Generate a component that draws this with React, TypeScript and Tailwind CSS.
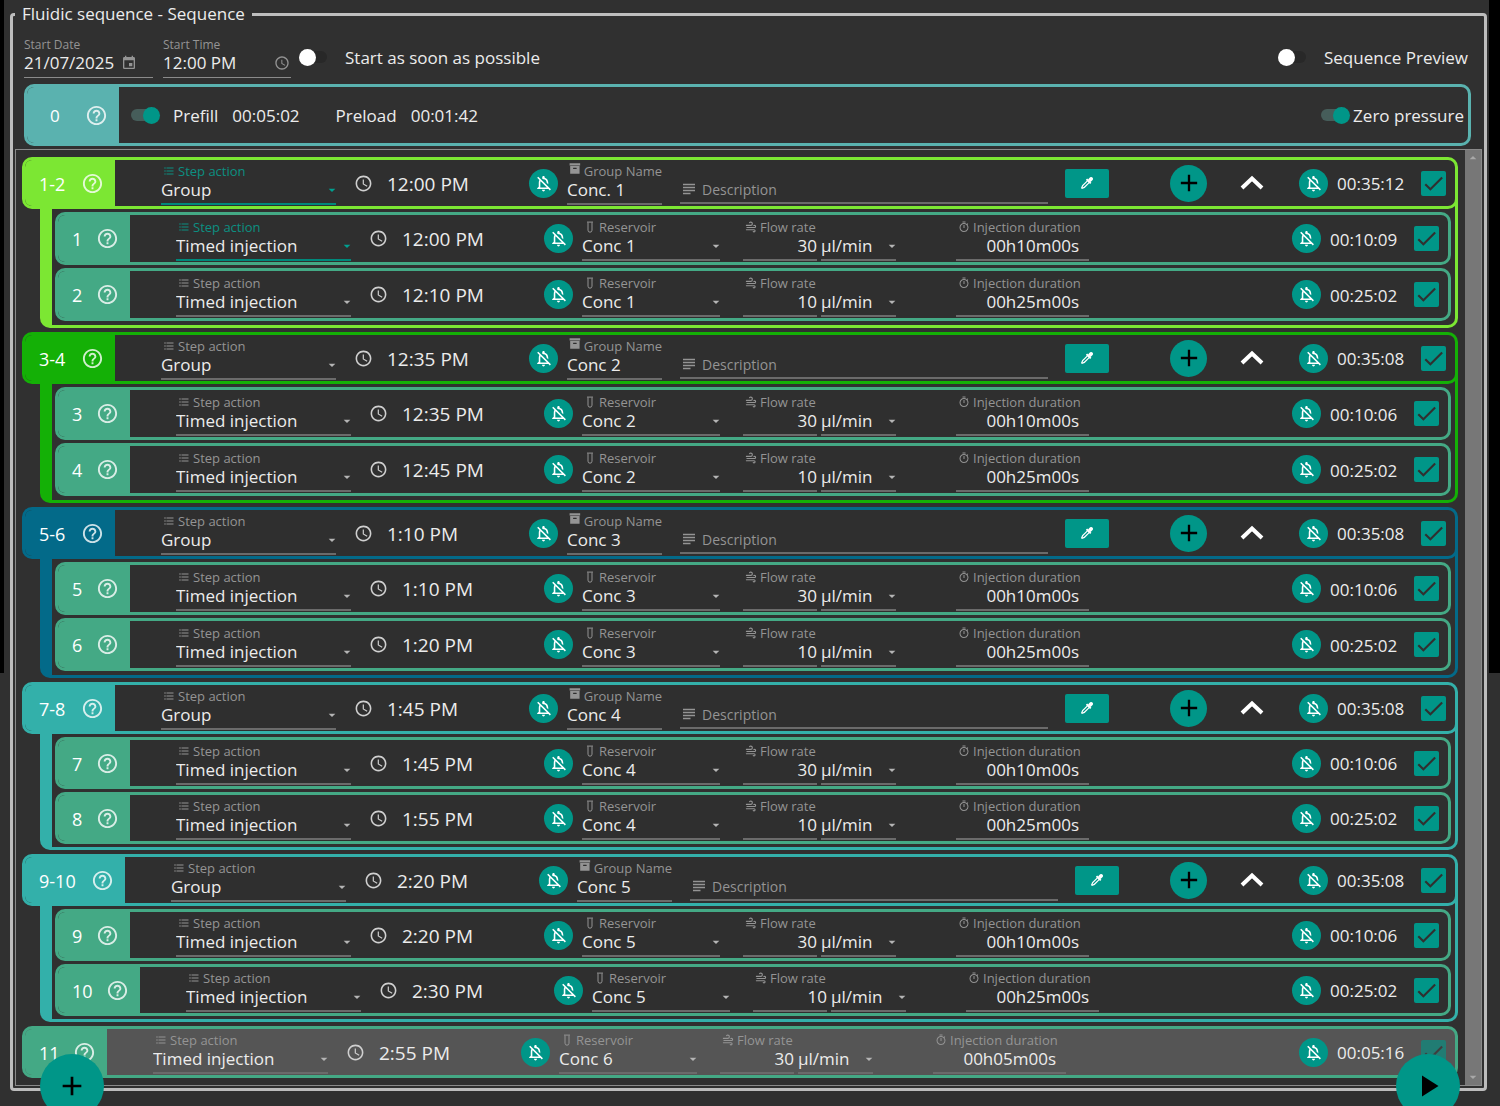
import React, { useId, useState } from 'react'
import {
  MdAdd,
  MdArrowDropDown,
  MdCheck,
  MdEvent,
  MdFormatListBulleted,
  MdHelpOutline,
  MdOutlineNotificationsOff,
  MdOutlineTimer,
  MdPlayArrow,
  MdSchedule,
  MdSubject,
} from 'react-icons/md'

interface Step {
  id: string
  time: string
  duration: string
  reservoir: string
  flow: string
  injection: string
  active?: boolean
}

interface Group {
  id: string
  name: string
  time: string
  duration: string
  tone: Tone
  active?: boolean
  compact?: boolean
  steps: Step[]
}

type Tone = 'lime' | 'green' | 'blue' | 'teal'

const tones: Record<Tone, { border: string; fill: string }> = {
  lime: { border: 'border-[#7ce733]', fill: 'bg-[#7ce733]' },
  green: { border: 'border-[#14b006]', fill: 'bg-[#14b006]' },
  blue: { border: 'border-[#036a89]', fill: 'bg-[#036a89]' },
  teal: { border: 'border-[#33b0aa]', fill: 'bg-[#33b0aa]' },
}

const groups: Group[] = [
  {
    id: '1-2', name: 'Conc. 1', time: '12:00 PM', duration: '00:35:12', tone: 'lime', active: true,
    steps: [
      { id: '1', time: '12:00 PM', duration: '00:10:09', reservoir: 'Conc 1', flow: '30', injection: '00h10m00s', active: true },
      { id: '2', time: '12:10 PM', duration: '00:25:02', reservoir: 'Conc 1', flow: '10', injection: '00h25m00s' },
    ],
  },
  {
    id: '3-4', name: 'Conc 2', time: '12:35 PM', duration: '00:35:08', tone: 'green',
    steps: [
      { id: '3', time: '12:35 PM', duration: '00:10:06', reservoir: 'Conc 2', flow: '30', injection: '00h10m00s' },
      { id: '4', time: '12:45 PM', duration: '00:25:02', reservoir: 'Conc 2', flow: '10', injection: '00h25m00s' },
    ],
  },
  {
    id: '5-6', name: 'Conc 3', time: '1:10 PM', duration: '00:35:08', tone: 'blue',
    steps: [
      { id: '5', time: '1:10 PM', duration: '00:10:06', reservoir: 'Conc 3', flow: '30', injection: '00h10m00s' },
      { id: '6', time: '1:20 PM', duration: '00:25:02', reservoir: 'Conc 3', flow: '10', injection: '00h25m00s' },
    ],
  },
  {
    id: '7-8', name: 'Conc 4', time: '1:45 PM', duration: '00:35:08', tone: 'teal', compact: true,
    steps: [
      { id: '7', time: '1:45 PM', duration: '00:10:06', reservoir: 'Conc 4', flow: '30', injection: '00h10m00s' },
      { id: '8', time: '1:55 PM', duration: '00:25:02', reservoir: 'Conc 4', flow: '10', injection: '00h25m00s' },
    ],
  },
  {
    id: '9-10', name: 'Conc 5', time: '2:20 PM', duration: '00:35:08', tone: 'teal', compact: true,
    steps: [
      { id: '9', time: '2:20 PM', duration: '00:10:06', reservoir: 'Conc 5', flow: '30', injection: '00h10m00s' },
      { id: '10', time: '2:30 PM', duration: '00:25:02', reservoir: 'Conc 5', flow: '10', injection: '00h25m00s' },
    ],
  },
]

const lastStep: Step = {
  id: '11', time: '2:55 PM', duration: '00:05:16', reservoir: 'Conc 6', flow: '30', injection: '00h05m00s',
}

// Badge width follows the number of characters in the step label
const badgeWidths: Record<number, string> = {
  1: 'w-[72px]',
  2: 'w-[82px]',
  3: 'w-[90px]',
  4: 'w-[100px]',
}

function TubeIcon() {
  return (
    <svg viewBox="0 0 12 12" className="size-3" fill="none" stroke="currentColor" aria-hidden="true">
      <path d="M3 1.1h6M4 1.5v7.7a2 2 0 0 0 4 0V1.5" />
    </svg>
  )
}

function ArchiveIcon() {
  return (
    <svg viewBox="2 3 20 20" className="mb-1 size-3" fill="currentColor" aria-hidden="true">
      <path d="M3 3h18v4H3zM4 8h16v13H4zm5.500 3a.5.5 0 0 0-.5.5V13h6v-1.500a.5.5 0 0 0-.5-.5z" fillRule="evenodd" />
    </svg>
  )
}

function WindIcon() {
  return (
    <svg viewBox="2 1 21 22" className="size-3" fill="currentColor" aria-hidden="true">
      <path d="M4 10a1 1 0 0 1 0-2h8a2 2 0 0 0 0-4c-.55 0-1.050.22-1.410.59-.39.41-1.030.41-1.420 0-.39-.39-.39-1.030 0-1.420C9.900 2.450 10.900 2 12 2a4 4 0 0 1 0 8H4m15 2a1 1 0 0 0 0-2c-.28 0-.53.11-.71.29-.39.39-1.020.39-1.410 0-.38-.39-.38-1.020 0-1.410C17.420 8.340 18.170 8 19 8a3 3 0 0 1 0 6H5a1 1 0 0 1 0-2h14m-1 6H4a1 1 0 0 1 0-2h14a3 3 0 0 1 0 6c-.83 0-1.580-.34-2.120-.88-.38-.39-.38-1.020 0-1.410.39-.39 1.020-.39 1.410 0 .18.18.43.29.71.29a1 1 0 0 0 0-2z" />
    </svg>
  )
}

function EyedropperIcon() {
  return (
    <svg viewBox="2 2 20 20" className="size-3" fill="currentColor" aria-hidden="true">
      <path d="M19.35 11.72 17.22 13.85 15.81 12.43 8.1 20.14 3.5 22 2 20.5 3.86 15.9 11.57 8.19 10.15 6.78 12.28 4.65ZM16.76 3a3 3 0 0 1 4.24 0 3 3 0 0 1 0 4.24l-3 3L13.76 6ZM5.56 17.03 4.5 19.5 6.97 18.44 14.4 11 13 9.6Z" fillRule="evenodd" />
    </svg>
  )
}

function ChevronUp() {
  return (
    <svg viewBox="0 0 24 16" className="h-4 w-6" fill="none" stroke="currentColor" strokeWidth="4" aria-hidden="true">
      <path d="M2 13 12 3.500 22 13" />
    </svg>
  )
}

// The text beside it comes from the surrounding <label>
function Toggle({ on = false }: { on?: boolean }) {
  const [checked, setChecked] = useState(on)
  return (
    <span className="relative flex h-5 w-7 shrink-0 items-center">
      <input
        type="checkbox"
        role="switch"
        checked={checked}
        onChange={e => setChecked(e.target.checked)}
        className="peer h-3 w-7 appearance-none rounded-full bg-[#282828] checked:bg-[#465d5a]"
      />
      <span className="pointer-events-none absolute left-0 size-[17px] rounded-full bg-white peer-checked:left-[12px] peer-checked:bg-[#009688]" />
    </span>
  )
}

function Tick({ label, faded = false }: { label: string; faded?: boolean }) {
  return (
    <span className={`relative size-[25px] shrink-0 ${faded ? 'opacity-60' : ''}`}>
      <input type="checkbox" defaultChecked aria-label={label} className="block size-full appearance-none rounded-xs bg-[#009688]" />
      <MdCheck className="pointer-events-none absolute inset-0 size-full text-[#303030]" />
    </span>
  )
}

function BellButton() {
  return (
    <button type="button" aria-label="Notifications off" className="flex size-[29px] shrink-0 items-center justify-center rounded-full bg-[#009688] text-white">
      <MdOutlineNotificationsOff className="size-[19px]" />
    </button>
  )
}

interface FieldProps {
  label: string
  icon: React.ReactNode
  width: string
  active?: boolean
  children: (id: string) => React.ReactNode
}

function Field({ label, icon, width, active = false, children }: FieldProps) {
  const id = useId()
  return (
    <div className={`flex h-[44px] shrink-0 flex-col border-b-2 pt-px ${width} ${active ? 'border-[#00897b]' : 'border-[#6b6b6b]'}`}>
      <label htmlFor={id} className={`flex h-[18px] items-center gap-[3px] pl-0.5 text-[13px] leading-[18px] whitespace-nowrap ${active ? 'text-[#0c8f82]' : 'text-[#949494]'}`}>
        {icon}
        {label}
      </label>
      {children(id)}
    </div>
  )
}

function SelectBox({ id, value, active = false, label }: { id?: string; value: string; active?: boolean; label?: string }) {
  return (
    <div className="relative flex w-full items-center">
      <select id={id} aria-label={label} defaultValue={value} className="h-5 w-full appearance-none bg-transparent text-[17px] leading-5 text-[#ececec] outline-none">
        <option>{value}</option>
      </select>
      <MdArrowDropDown className={`pointer-events-none absolute right-[-4px] size-4 ${active ? 'text-[#00a090]' : 'text-[#b5b5b5]'}`} />
    </div>
  )
}

function Badge({ id, fill }: { id: string; fill: string }) {
  return (
    <div className={`flex shrink-0 items-center justify-between pr-[11px] pl-[14px] text-white ${badgeWidths[id.length]} ${fill}`}>
      <span className="pt-0.5 text-[18px]">{id}</span>
      <button type="button" aria-label={`Help for step ${id}`} className="opacity-80">
        <MdHelpOutline className="size-[23px]" />
      </button>
    </div>
  )
}

function ActionAndTime({ action, time, active }: { action: string; time: string; active?: boolean }) {
  return (
    <>
      <Field label="Step action" icon={<MdFormatListBulleted className="size-3" />} width="ml-[46px] w-[175px]" active={active}>
        {id => <SelectBox id={id} value={action} active={active} />}
      </Field>
      <MdSchedule className="ml-[18px] size-[19px] shrink-0 text-[#d0d0d0]" />
      <span className="ml-[14px] w-[142px] shrink-0 pt-0.5 text-[19px]">{time}</span>
      <BellButton />
    </>
  )
}

function Total({ id, duration, faded }: { id: string; duration: string; faded?: boolean }) {
  return (
    <div className="flex shrink-0 items-center pr-[9px]">
      <BellButton />
      <span className="ml-[9px] w-[84px] pt-0.5 text-[17px]">{duration}</span>
      <Tick label={`Enable step ${id}`} faded={faded} />
    </div>
  )
}

function StepRow({ step, height, faded = false }: { step: Step; height: string; faded?: boolean }) {
  return (
    <div className={`flex overflow-hidden rounded-[10px] border-3 border-[#44a985] ${height} ${faded ? 'bg-[#555555]' : 'bg-[#2f2f2f]'}`}>
      <Badge id={step.id} fill="bg-[#44a985]" />
      <div className="flex min-w-0 flex-1 items-center">
        <ActionAndTime action="Timed injection" time={step.time} active={step.active} />
        <Field label="Reservoir" icon={<TubeIcon />} width="ml-[9px] w-[138px]">
          {id => <SelectBox id={id} value={step.reservoir} />}
        </Field>
        <Field label="Flow rate" icon={<WindIcon />} width="ml-[23px] w-[74px]">
          {id => (
            <input id={id} defaultValue={step.flow} className="h-5 w-full bg-transparent text-right text-[17px] leading-5 outline-none" />
          )}
        </Field>
        <div className="ml-1 flex h-[44px] w-[75px] shrink-0 items-end border-b-2 border-[#6b6b6b] pb-[3px]">
          <SelectBox label="Flow rate unit" value="µl/min" />
        </div>
        <Field label="Injection duration" icon={<MdOutlineTimer className="size-3" />} width="ml-[60px] w-[133px]">
          {id => (
            <input id={id} defaultValue={step.injection} className="h-5 w-full bg-transparent pr-[10px] text-right text-[17px] leading-5 outline-none" />
          )}
        </Field>
      </div>
      <Total id={step.id} duration={step.duration} faded={faded} />
    </div>
  )
}

function GroupHeader({ group }: { group: Group }) {
  const { border, fill } = tones[group.tone]
  return (
    <div className={`relative flex h-[52px] overflow-hidden rounded-[10px] border-3 bg-[#2f2f2f] ${border}`}>
      <Badge id={group.id} fill={fill} />
      <div className="flex min-w-0 flex-1 items-center">
        <ActionAndTime action="Group" time={group.time} active={group.active} />
        <Field label="Group Name" icon={<ArchiveIcon />} width="ml-[9px] w-[95px]">
          {id => <input id={id} defaultValue={group.name} className="h-5 w-full bg-transparent text-[17px] leading-5 outline-none" />}
        </Field>
        <label className="ml-[18px] flex h-[42px] w-[368px] shrink-0 items-center gap-1 border-b-2 border-[#6b6b6b] pt-[14px] text-[#949494]">
          <MdSubject className="size-[18px] shrink-0" />
          <input placeholder="Description" aria-label="Description" className="w-full bg-transparent text-[14px] outline-none placeholder:text-[#949494]" />
        </label>
        <button type="button" aria-label="Pick colour" className="ml-[17px] flex h-[29px] w-11 shrink-0 items-center justify-center rounded-xs bg-[#009688] text-white">
          <EyedropperIcon />
        </button>
      </div>
      <div className="flex shrink-0 items-center">
        <button type="button" aria-label="Add step" className="flex size-[37px] items-center justify-center rounded-full bg-[#009688] text-black">
          <MdAdd className="size-7" />
        </button>
        <button type="button" aria-label="Collapse group" className="mr-[35px] ml-[33px] text-white">
          <ChevronUp />
        </button>
        <Total id={group.id} duration={group.duration} />
      </div>
    </div>
  )
}

function GroupBlock({ group }: { group: Group }) {
  const { border } = tones[group.tone]
  return (
    <section>
      <GroupHeader group={group} />
      <div className={`-mt-3 ml-[18px] flex flex-col gap-[3px] rounded-b-[10px] border-r-3 border-b-3 border-l-12 pt-[15px] pr-1 pl-[3px] ${border} ${group.compact ? 'pb-[3px]' : 'pb-1'}`}>
        {group.steps.map(step => (
          <StepRow key={step.id} step={step} height={group.compact ? 'h-[52px]' : 'h-[53px]'} />
        ))}
      </div>
    </section>
  )
}

export default function App(): React.JSX.Element {
  return (
    <main className="relative flex min-h-screen overflow-hidden bg-[#303030] font-['Open_Sans','Noto_Sans',sans-serif] text-[#ececec]">
      <div className="h-[673px] w-1 shrink-0 bg-black" />

      <fieldset className="mr-[2px] mb-[15px] ml-[6px] min-w-0 flex-1 rounded-sm border-3 border-[#bdbdbd] px-[2px] pb-[2px]">
        <legend className="px-[7px] text-[17px] leading-7">Fluidic sequence - Sequence</legend>

        {/* Start settings */}
        <div className="flex h-[56px] items-center pt-0.5 pr-[14px] pl-[9px]">
          <div className="flex h-[41px] w-[129px] flex-col border-b border-[#8a8a8a]">
            <label htmlFor="start-date" className="text-[12px] leading-4 text-[#949494]">Start Date</label>
            <div className="flex items-center">
              <input id="start-date" defaultValue="21/07/2025" className="h-5 w-[97px] bg-transparent text-[17px] leading-5 outline-none" />
              <MdEvent className="size-4 text-[#949494]" />
            </div>
          </div>
          <div className="ml-[10px] flex h-[41px] w-[128px] flex-col border-b border-[#8a8a8a]">
            <label htmlFor="start-time" className="text-[12px] leading-4 text-[#949494]">Start Time</label>
            <div className="flex items-center">
              <input id="start-time" defaultValue="12:00 PM" className="h-5 w-[111px] bg-transparent text-[17px] leading-5 outline-none" />
              <MdSchedule className="size-4 text-[#949494]" />
            </div>
          </div>
          <label className="ml-2 flex items-center gap-[18px] text-[17px]">
            <Toggle />
            <span className="pt-0.5">Start as soon as possible</span>
          </label>
          <label className="ml-auto flex items-center gap-[18px] text-[17px]">
            <Toggle />
            <span className="pt-0.5">Sequence Preview</span>
          </label>
        </div>

        {/* Step 0 */}
        <div className="mr-[11px] ml-[9px] flex h-[62px] overflow-hidden rounded-[10px] border-3 border-[#5ab2af] text-[17px]">
          <div className="flex w-[92px] shrink-0 items-center justify-between bg-[#5ab2af] pr-[11px] pl-[23px] text-white">
            <span className="pt-0.5">0</span>
            <button type="button" aria-label="Help for step 0" className="opacity-80">
              <MdHelpOutline className="size-[23px]" />
            </button>
          </div>
          <label className="ml-[12px] flex items-center gap-[14px]">
            <Toggle on />
            <span className="pt-0.5">Prefill</span>
          </label>
          <span className="ml-[14px] flex items-center pt-0.5">00:05:02</span>
          <span className="ml-9 flex items-center pt-0.5">Preload</span>
          <span className="ml-[14px] flex items-center pt-0.5">00:01:42</span>
          <label className="mr-1 ml-auto flex items-center gap-1">
            <Toggle on />
            <span className="pt-0.5">Zero pressure</span>
          </label>
        </div>

        {/* Sequence list */}
        <div className="mt-[3px] flex border border-[#8a8a8a]">
          <div className="flex min-w-0 flex-1 flex-col gap-1 pt-[7px] pr-[7px] pb-[7px] pl-[6px]">
            {groups.map(group => (
              <GroupBlock key={group.id} group={group} />
            ))}
            <StepRow step={lastStep} height="h-[52px]" faded />
          </div>
          <div className="flex w-4 shrink-0 flex-col items-center justify-between bg-[#777777] text-[#a8a8a8]">
            <MdArrowDropDown className="size-4 rotate-180" />
            <MdArrowDropDown className="size-4" />
          </div>
        </div>
      </fieldset>

      <div className="h-[673px] w-[11px] shrink-0 bg-black" />

      <button type="button" aria-label="Add" className="absolute -bottom-3 left-10 flex size-16 items-center justify-center rounded-full bg-[#009688] text-black">
        <MdAdd className="size-8" />
      </button>
      <button type="button" aria-label="Run sequence" className="absolute right-10 -bottom-3 flex size-16 items-center justify-center rounded-full bg-[#009688] text-black">
        <MdPlayArrow className="size-9" />
      </button>
    </main>
  )
}
